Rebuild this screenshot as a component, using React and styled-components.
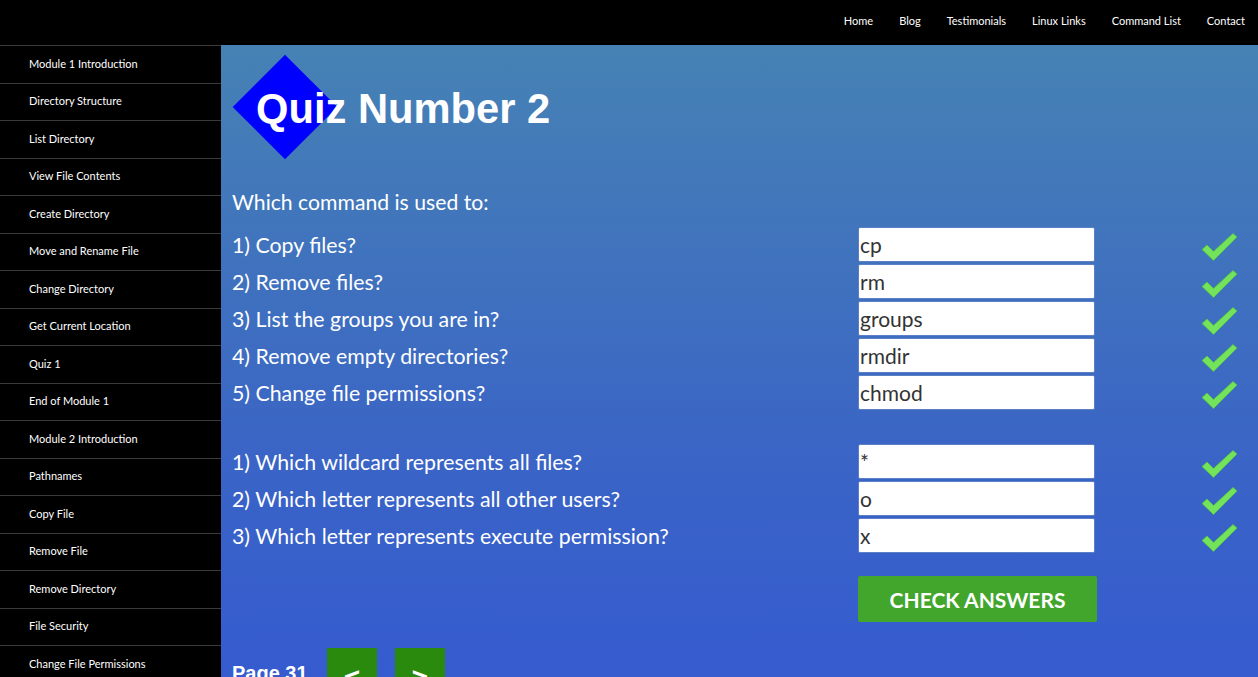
import React from "react";
import styled, { createGlobalStyle } from "styled-components";

const GlobalStyle = createGlobalStyle`
  body {
    margin: 0;
    font-family: Lato, "Open Sans", sans-serif;
    background: #000;
  }
  * { box-sizing: border-box; }
`;

const topLinks = ["Home", "Blog", "Testimonials", "Linux Links", "Command List", "Contact"];

const sideLinks = [
  "Module 1 Introduction",
  "Directory Structure",
  "List Directory",
  "View File Contents",
  "Create Directory",
  "Move and Rename File",
  "Change Directory",
  "Get Current Location",
  "Quiz 1",
  "End of Module 1",
  "Module 2 Introduction",
  "Pathnames",
  "Copy File",
  "Remove File",
  "Remove Directory",
  "File Security",
  "Change File Permissions",
];

const groupOne = [
  { q: "1) Copy files?", a: "cp" },
  { q: "2) Remove files?", a: "rm" },
  { q: "3) List the groups you are in?", a: "groups" },
  { q: "4) Remove empty directories?", a: "rmdir" },
  { q: "5) Change file permissions?", a: "chmod" },
];

const groupTwo = [
  { q: "1) Which wildcard represents all files?", a: "*" },
  { q: "2) Which letter represents all other users?", a: "o" },
  { q: "3) Which letter represents execute permission?", a: "x" },
];

function Check() {
  return (
    <CheckMark width="37" height="30" viewBox="0 0 37 30">
      <path d="M1 17.5 L6 13 L12.5 19.5 L32 1.5 L36 5 L12.5 28.5 Z" />
    </CheckMark>
  );
}

function QuizGroup({ items }) {
  return (
    <Grid>
      {items.map((item) => (
        <React.Fragment key={item.q}>
          <Question>{item.q}</Question>
          <Answer defaultValue={item.a} />
          <CheckCell>
            <Check />
          </CheckCell>
        </React.Fragment>
      ))}
    </Grid>
  );
}

export default function App() {
  return (
    <>
      <GlobalStyle />
      <Header>
        <TopNav>
          {topLinks.map((l) => (
            <TopLink key={l}>{l}</TopLink>
          ))}
        </TopNav>
      </Header>
      <Body>
        <Sidebar>
          {sideLinks.map((l) => (
            <SideLink key={l}>{l}</SideLink>
          ))}
        </Sidebar>
        <Main>
          <TitleRow>
            <Title>Quiz Number 2</Title>
          </TitleRow>
          <Intro>Which command is used to:</Intro>
          <QuizGroup items={groupOne} />
          <Spacer />
          <QuizGroup items={groupTwo} />
          <ButtonRow>
            <CheckButton>Check Answers</CheckButton>
          </ButtonRow>
          <Pager>
            <PageLabel>Page 31</PageLabel>
            <PageButton>&lt;</PageButton>
            <PageButton>&gt;</PageButton>
          </Pager>
        </Main>
      </Body>
    </>
  );
}

const Header = styled.header`
  height: 45px;
  padding-bottom: 4px;
  background: #000;
  display: flex;
  justify-content: flex-end;
  align-items: center;
`;

const TopNav = styled.nav`
  display: flex;
  padding-right: 0;
`;

const TopLink = styled.a`
  color: #fff;
  font-size: 11px;
  padding: 0 13px;
  line-height: 30px;
  cursor: pointer;
`;

const Body = styled.div`
  display: flex;
  align-items: stretch;
`;

const Sidebar = styled.aside`
  width: 221px;
  flex-shrink: 0;
  background: #000;
`;

const SideLink = styled.a`
  display: flex;
  align-items: center;
  height: 37.5px;
  padding: 0 0 2px 29px;
  border-top: 1px solid #3a3a3a;
  color: #fff;
  font-size: 11px;
  cursor: pointer;
`;

const Main = styled.main`
  flex: 1;
  padding: 10px 0 40px 11px;
  background: linear-gradient(180deg, #4682b4 0%, #3a64c6 60%, #3459d2 100%);
  color: #fff;
`;

const TitleRow = styled.div`
  position: relative;
  height: 130px;
  display: flex;
  align-items: center;
  padding-left: 24px;

  &::before {
    content: "";
    position: absolute;
    left: 16px;
    top: 15px;
    width: 74px;
    height: 74px;
    background: #0000ff;
    transform: rotate(45deg);
  }
`;

const Title = styled.h1`
  position: relative;
  margin: 0 0 22px;
  font-family: "Liberation Sans", Arial, sans-serif;
  font-weight: bold;
  font-size: 41.7px;
  color: #fff;
`;

const Intro = styled.p`
  margin: 0 0 7px;
  font-size: 21.2px;
  line-height: 34px;
`;

const Grid = styled.div`
  display: grid;
  grid-template-columns: 626px 237px 1fr;
  grid-auto-rows: 37px;
  align-items: center;
`;

const Question = styled.div`
  font-size: 21.3px;
`;

const Answer = styled.input`
  height: 35px;
  width: 237px;
  border: 1px solid #5d7fc6;
  border-radius: 2px;
  padding: 0 0 0 1px;
  font-family: Lato, sans-serif;
  font-size: 21px;
  color: #333;
  background: #fff;
  outline: none;
`;

const CheckCell = styled.div`
  padding: 5px 0 0 106px;
  height: 37px;
  display: flex;
  align-items: center;
`;

const CheckMark = styled.svg`
  fill: #72e35a;
  stroke: #55c243;
  stroke-width: 0.8;
`;

const Spacer = styled.div`
  height: 32px;
`;

const ButtonRow = styled.div`
  padding: 22px 0 0 626px;
`;

const CheckButton = styled.button`
  width: 239px;
  height: 46px;
  border: none;
  border-radius: 2px;
  background: #41a62b;
  color: #fff;
  font-family: Lato, sans-serif;
  font-weight: bold;
  font-size: 21px;
  text-transform: uppercase;
  cursor: pointer;
`;

const Pager = styled.div`
  display: flex;
  align-items: flex-start;
  margin-top: 26px;
`;

const PageLabel = styled.span`
  font-family: "Liberation Sans", Arial, sans-serif;
  font-weight: bold;
  font-size: 20px;
  padding-top: 14px;
  width: 95px;
`;

const PageButton = styled.button`
  width: 50px;
  height: 50px;
  margin-right: 18px;
  border: none;
  background: #2a8a0e;
  color: #fff;
  font-family: "Liberation Sans", Arial, sans-serif;
  font-weight: bold;
  font-size: 28px;
  padding-top: 10px;
`;
